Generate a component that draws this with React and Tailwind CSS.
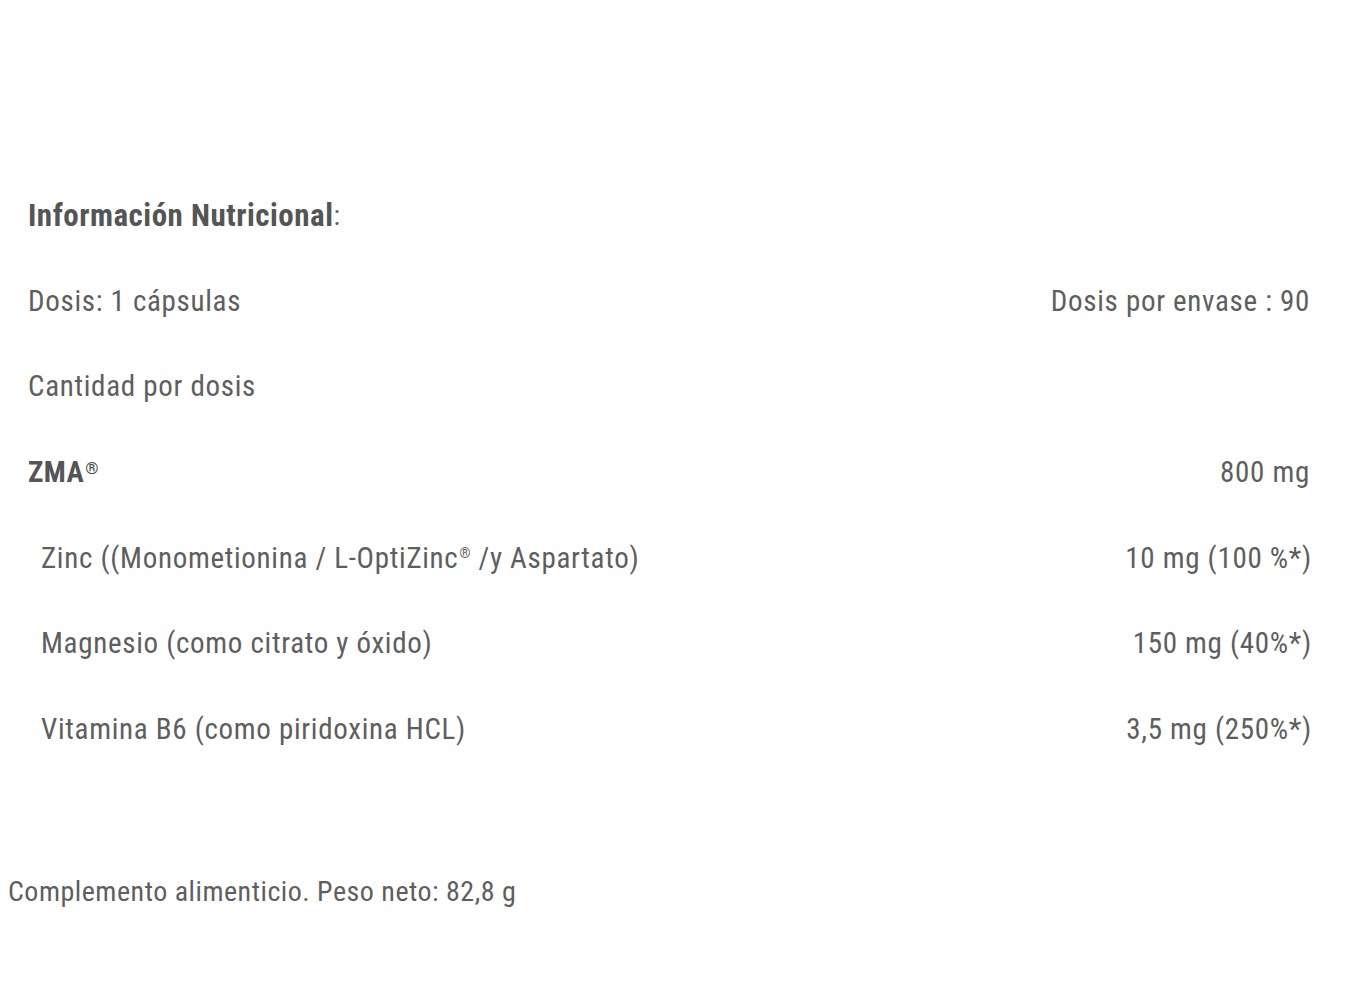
function Row({ left, right, sub = false, bold = false }) {
  return (
    <div className={`flex h-[85.6px] items-center justify-between ${sub ? "pl-[41px] pr-[56px]" : "pl-[28px] pr-[58px]"}`}>
      <span className={bold ? "font-bold tracking-[0.4px] text-[#555555]" : ""}>{left}</span>
      <span>{right}</span>
    </div>
  );
}

export default function App() {
  return (
    <div
      className="min-h-[1000px] bg-white pt-[173px] text-[29px] leading-none tracking-[0.7px] text-[#5e5e5e] font-stretch-semi-condensed"
      style={{ fontFamily: "Roboto, 'Liberation Sans', sans-serif" }}
    >
      <div className="flex h-[85.6px] items-center pl-[28px]">
        <span className="text-[31px] font-bold tracking-[0.5px] text-[#555555]">Información Nutricional</span>
        <span className="text-[28px]">:</span>
      </div>
      <Row left="Dosis: 1 cápsulas" right="Dosis por envase : 90" />
      <Row left="Cantidad por dosis" right="" />
      <Row
        bold
        left={
          <>
            ZMA<span className="ml-[1px] align-[8px] text-[17px] font-bold">®</span>
          </>
        }
        right="800 mg"
      />
      <Row
        sub
        left={
          <>
            Zinc ((Monometionina / L-OptiZinc<span className="ml-[1px] align-[10px] text-[14px]">®</span> /y Aspartato)
          </>
        }
        right="10 mg (100 %*)"
      />
      <Row sub left="Magnesio (como citrato y óxido)" right="150 mg (40%*)" />
      <Row sub left="Vitamina B6 (como piridoxina HCL)" right="3,5 mg (250%*)" />
      <div className="mt-[106px] pl-[8px] text-[28px] tracking-[0.5px]">Complemento alimenticio. Peso neto: 82,8 g</div>
    </div>
  );
}
